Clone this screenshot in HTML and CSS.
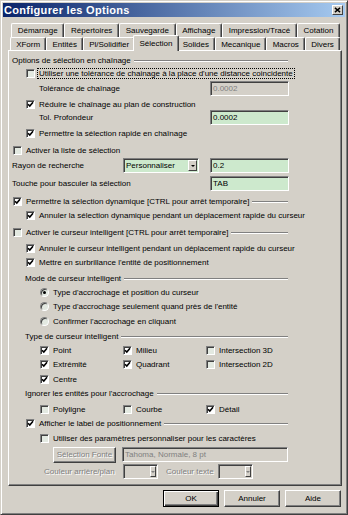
FILE: index.html
```html
<!DOCTYPE html>
<html lang="fr">
<head>
    <meta charset="UTF-8">
    <meta name="viewport" content="width=device-width, initial-scale=1.0">
    <title>Configurer les Options</title>
    <link rel="stylesheet" href="styles.css">
</head>
<body>
    <div class="window">
        <!-- Title bar -->
        <div class="titlebar">
            <span class="title">Configurer les Options</span>
            <span class="close">
                <svg viewBox="0 0 8 7" width="7" height="6"><path d="M1 1l6 5M7 1L1 6" stroke="#000" stroke-width="1.6"/></svg>
            </span>
        </div>

        <!-- Tabs -->
        <div class="tabs">
            <div class="tab-row back">
                <div class="tab">Démarrage</div>
                <div class="tab">Répertoires</div>
                <div class="tab">Sauvegarde</div>
                <div class="tab">Affichage</div>
                <div class="tab">Impression/Tracé</div>
                <div class="tab">Cotation</div>
            </div>
            <div class="tab-row front">
                <div class="tab">XForm</div>
                <div class="tab">Entités</div>
                <div class="tab">Pl/Solidifier</div>
                <div class="tab active">Sélection</div>
                <div class="tab">Solides</div>
                <div class="tab">Mecanique</div>
                <div class="tab">Macros</div>
                <div class="tab">Divers</div>
            </div>
        </div>

        <!-- Panel -->
        <div class="panel">
            <div class="row l0">
                <span>Options de sélection en chaînage</span><span class="rule"></span>
            </div>
            <div class="row l2">
                <span class="cb"></span><span class="focus">Utiliser une tolérance de chainage à la place d'une distance coincidente</span>
            </div>
            <div class="row l2t mt2">
                <span>Tolérance de chaînage</span>
                <span class="field off">0.0002</span>
            </div>
            <div class="row l2 mt3">
                <span class="cb on"><svg viewBox="0 0 7 7"><path d="M1 3.2l1.8 1.9L6 1.3"/></svg></span><span>Réduire le chaînage au plan de construction</span>
            </div>
            <div class="row l2t">
                <span>Tol. Profondeur</span>
                <span class="field">0.0002</span>
            </div>
            <div class="row l2 mt3">
                <span class="cb on"><svg viewBox="0 0 7 7"><path d="M1 3.2l1.8 1.9L6 1.3"/></svg></span><span>Permettre la sélection rapide en chaînage</span>
            </div>
            <div class="row l1 mt4">
                <span class="cb"></span><span>Activer la liste de sélection</span>
            </div>
            <div class="row l0 mt2">
                <span class="label-w">Rayon de recherche</span>
                <span class="select">Personnaliser<span class="drop"></span></span>
                <span class="field">0.2</span>
            </div>
            <div class="row l0 mt5">
                <span>Touche pour basculer la sélection</span>
                <span class="field">TAB</span>
            </div>
            <div class="row l1 mt5">
                <span class="cb on"><svg viewBox="0 0 7 7"><path d="M1 3.2l1.8 1.9L6 1.3"/></svg></span><span>Permettre la sélection dynamique [CTRL pour arrêt temporaire]</span><span class="rule"></span>
            </div>
            <div class="row l2 mt1">
                <span class="cb on"><svg viewBox="0 0 7 7"><path d="M1 3.2l1.8 1.9L6 1.3"/></svg></span><span>Annuler la sélection dynamique pendant un déplacement rapide du curseur</span>
            </div>
            <div class="row l1 mt4">
                <span class="cb"></span><span>Activer le curseur intelligent [CTRL pour arrêt temporaire]</span><span class="rule"></span>
            </div>
            <div class="row l2 mt3">
                <span class="cb on"><svg viewBox="0 0 7 7"><path d="M1 3.2l1.8 1.9L6 1.3"/></svg></span><span>Annuler le curseur intelligent pendant un déplacement rapide du curseur</span>
            </div>
            <div class="row l2 mt1">
                <span class="cb on"><svg viewBox="0 0 7 7"><path d="M1 3.2l1.8 1.9L6 1.3"/></svg></span><span>Mettre en surbrillance l'entité de positionnement</span>
            </div>
            <div class="row lh mt3">
                <span>Mode de curseur intelligent</span><span class="rule"></span>
            </div>
            <div class="row l3 mt1">
                <span class="radio on"></span><span>Type d'accrochage et position du curseur</span>
            </div>
            <div class="row l3 mt1">
                <span class="radio"></span><span>Type d'accrochage seulement quand près de l'entité</span>
            </div>
            <div class="row l3 mt2">
                <span class="radio"></span><span>Confirmer l'accrochage en cliquant</span>
            </div>
            <div class="row lh mt2">
                <span>Type de curseur intelligent</span><span class="rule"></span>
            </div>
            <div class="row l3 mt1">
                <span class="cell"><span class="cb on"><svg viewBox="0 0 7 7"><path d="M1 3.2l1.8 1.9L6 1.3"/></svg></span><span>Point</span></span>
                <span class="cell"><span class="cb on"><svg viewBox="0 0 7 7"><path d="M1 3.2l1.8 1.9L6 1.3"/></svg></span><span>Milieu</span></span>
                <span class="cell"><span class="cb"></span><span>Intersection 3D</span></span>
            </div>
            <div class="row l3 mt1">
                <span class="cell"><span class="cb on"><svg viewBox="0 0 7 7"><path d="M1 3.2l1.8 1.9L6 1.3"/></svg></span><span>Extrémité</span></span>
                <span class="cell"><span class="cb on"><svg viewBox="0 0 7 7"><path d="M1 3.2l1.8 1.9L6 1.3"/></svg></span><span>Quadrant</span></span>
                <span class="cell"><span class="cb"></span><span>Intersection 2D</span></span>
            </div>
            <div class="row l3 mt2">
                <span class="cell"><span class="cb on"><svg viewBox="0 0 7 7"><path d="M1 3.2l1.8 1.9L6 1.3"/></svg></span><span>Centre</span></span>
            </div>
            <div class="row lh mt1">
                <span>Ignorer les entités pour l'accrochage</span><span class="rule"></span>
            </div>
            <div class="row l3 mt3">
                <span class="cell"><span class="cb"></span><span>Polyligne</span></span>
                <span class="cell"><span class="cb"></span><span>Courbe</span></span>
                <span class="cell"><span class="cb on"><svg viewBox="0 0 7 7"><path d="M1 3.2l1.8 1.9L6 1.3"/></svg></span><span>Détail</span></span>
            </div>
            <div class="row l2 mt1">
                <span class="cb on"><svg viewBox="0 0 7 7"><path d="M1 3.2l1.8 1.9L6 1.3"/></svg></span><span>Afficher le label de positionnement</span><span class="rule"></span>
            </div>
            <div class="row l3 mt2">
                <span class="cb"></span><span>Utiliser des paramètres personnaliser pour les caractères</span>
            </div>
            <div class="row l4 mt3">
                <span class="btn-font dim">Sélection Fonte</span>
                <span class="field off wide">Tahoma, Normale, 8 pt</span>
            </div>
            <div class="row l5 mt4">
                <span class="dim color-label">Couleur arrière/plan</span>
                <span class="combo"><span class="drop"></span></span>
                <span class="dim color-label2">Couleur texte</span>
                <span class="combo"><span class="drop"></span></span>
            </div>
        </div>

        <!-- Buttons -->
        <div class="buttons">
            <button class="default">OK</button>
            <button>Annuler</button>
            <button>Aide</button>
        </div>
    </div>
</body>
</html>
```

FILE: styles.css
```css
body {
    margin: 0;
    font-family: "Liberation Sans", Arial, sans-serif;
    font-size: 8px;
    color: #000;
    background: #d4d0c8;
}

.window {
    width: 348px;
    height: 515px;
    box-sizing: border-box;
    padding: 2px;
    background: #d4d0c8;
    border: 1px solid;
    border-color: #d4d0c8 #404040 #404040 #d4d0c8;
    box-shadow: inset 1px 1px #fff, inset -1px -1px #808080;
}

/* Title bar */
.titlebar {
    height: 14px;
    display: flex;
    align-items: center;
    justify-content: space-between;
    padding: 0 2px 0 1px;
    background: linear-gradient(to right, #0a246a, #a6caf0);
}

.title {
    color: #fff;
    font-weight: bold;
    font-size: 11px;
    letter-spacing: 0.3px;
}

.close {
    width: 11px;
    height: 10px;
    box-sizing: border-box;
    display: flex;
    align-items: center;
    justify-content: center;
    background: #d4d0c8;
    border: 1px solid;
    border-color: #fff #404040 #404040 #fff;
}

/* Tabs */
.tabs {
    margin-top: 6px;
}

.tab-row {
    display: flex;
}

.tab-row.back {
    margin-left: 8px;
    width: 329px;
    height: 14px;
}

.tab-row.front {
    margin-left: 7px;
    width: 330px;
    height: 13px;
}

.tab {
    flex: 1 1 auto;
    display: flex;
    align-items: center;
    justify-content: center;
    padding: 0 2px;
    background: #d4d0c8;
    border-top: 1px solid #fff;
    border-left: 1px solid #fff;
    border-right: 1px solid #404040;
    box-shadow: inset -1px 0 #808080;
    border-radius: 2px 2px 0 0;
    white-space: nowrap;
}

.tab.active {
    position: relative;
    z-index: 1;
    margin: -2px -2px -1px;
    padding-bottom: 1px;
}

/* Panel */
.panel {
    width: 334px;
    height: 436px;
    box-sizing: border-box;
    margin-left: 5px;
    padding: 3px 52px 0 0;
    border: 1px solid;
    border-color: #fff #404040 #404040 #fff;
    box-shadow: inset -1px -1px #808080;
}

.row {
    display: flex;
    align-items: center;
    height: 13px;
    white-space: nowrap;
}

.mt1 { margin-top: 1px; }
.mt2 { margin-top: 2px; }
.mt3 { margin-top: 3px; }
.mt4 { margin-top: 4px; }
.mt5 { margin-top: 5px; }

.l0 { padding-left: 3px; }
.l1 { padding-left: 4px; }
.l2 { padding-left: 17px; }
.l2t { padding-left: 30px; }
.lh { padding-left: 16px; }
.l3 { padding-left: 31px; }
.l4 { padding-left: 44px; }
.l5 { padding-left: 35px; }

.rule {
    flex: 1;
    margin-left: 3px;
    margin-right: 1px;
    border-top: 1px solid #808080;
    border-bottom: 1px solid #fff;
}

.focus {
    outline: 1px dotted #000;
    padding: 0 1px;
    margin-left: -1px;
}

/* Checkboxes and radios */
.cb, .radio {
    flex: none;
    width: 9px;
    height: 9px;
    box-sizing: border-box;
    margin-right: 4px;
    border: 1px solid;
    border-color: #808080 #fff #fff #808080;
    box-shadow: inset 1px 1px #404040;
    background: #e3e9e1;
    display: flex;
    align-items: center;
    justify-content: center;
}

.cb.on {
    background: #fff;
}

.cb svg {
    width: 7px;
    height: 7px;
}

.cb path {
    fill: none;
    stroke: #000;
    stroke-width: 1.6;
}

.radio {
    border-radius: 50%;
}

.radio.on::after {
    content: "";
    width: 3px;
    height: 3px;
    border-radius: 50%;
    background: #000;
}

.cell {
    width: 83px;
    display: flex;
    align-items: center;
}

/* Fields */
.field {
    flex: none;
    width: 79px;
    height: 15px;
    box-sizing: border-box;
    margin-left: auto;
    padding-left: 2px;
    display: flex;
    align-items: center;
    border: 1px solid;
    border-color: #808080 #fff #fff #808080;
    box-shadow: inset 1px 1px #404040;
    background: #cde9cd;
}

.field.off {
    background: #d4d0c8;
    color: #808080;
}

.field.wide {
    width: 166px;
    margin-left: 6px;
}

.label-w {
    width: 111px;
}

.select {
    width: 76px;
    height: 15px;
    box-sizing: border-box;
    padding-left: 2px;
    display: flex;
    align-items: center;
    justify-content: space-between;
    border: 1px solid;
    border-color: #808080 #fff #fff #808080;
    box-shadow: inset 1px 1px #404040;
    background: #cde9cd;
}

.drop {
    width: 9px;
    height: 11px;
    box-sizing: border-box;
    margin-right: 1px;
    display: flex;
    align-items: center;
    justify-content: center;
    background: #d4d0c8;
    border: 1px solid;
    border-color: #fff #404040 #404040 #fff;
}

.drop::after {
    content: "";
    border-left: 2px solid transparent;
    border-right: 2px solid transparent;
    border-top: 2px solid #000;
}

.combo {
    width: 35px;
    height: 15px;
    box-sizing: border-box;
    display: flex;
    align-items: center;
    justify-content: flex-end;
    border: 1px solid;
    border-color: #808080 #fff #fff #808080;
    box-shadow: inset 1px 1px #404040;
    background: #d4d0c8;
}

.combo .drop {
    width: 6px;
}

.combo .drop::after {
    border-top-color: #808080;
}

.dim {
    color: #808080;
    text-shadow: 1px 1px #fff;
}

.color-label {
    width: 79px;
}

.color-label2 {
    width: 52px;
    margin-left: 8px;
}

.btn-font {
    width: 63px;
    height: 16px;
    box-sizing: border-box;
    display: flex;
    align-items: center;
    justify-content: center;
    border: 1px solid;
    border-color: #fff #404040 #404040 #fff;
    box-shadow: inset -1px -1px #808080;
}

/* Dialog buttons */
.buttons {
    display: flex;
    justify-content: flex-end;
    gap: 5px;
    margin-top: 4px;
    padding-right: 4px;
}

button {
    width: 56px;
    height: 17px;
    padding: 0;
    font-family: inherit;
    font-size: 8px;
    color: #000;
    background: #d4d0c8;
    border: 1px solid;
    border-color: #fff #404040 #404040 #fff;
    box-shadow: inset -1px -1px #808080;
}

button.default {
    border-color: #000;
    box-shadow: inset 1px 1px #fff, inset -1px -1px #404040, inset -2px -2px #808080;
}
```
